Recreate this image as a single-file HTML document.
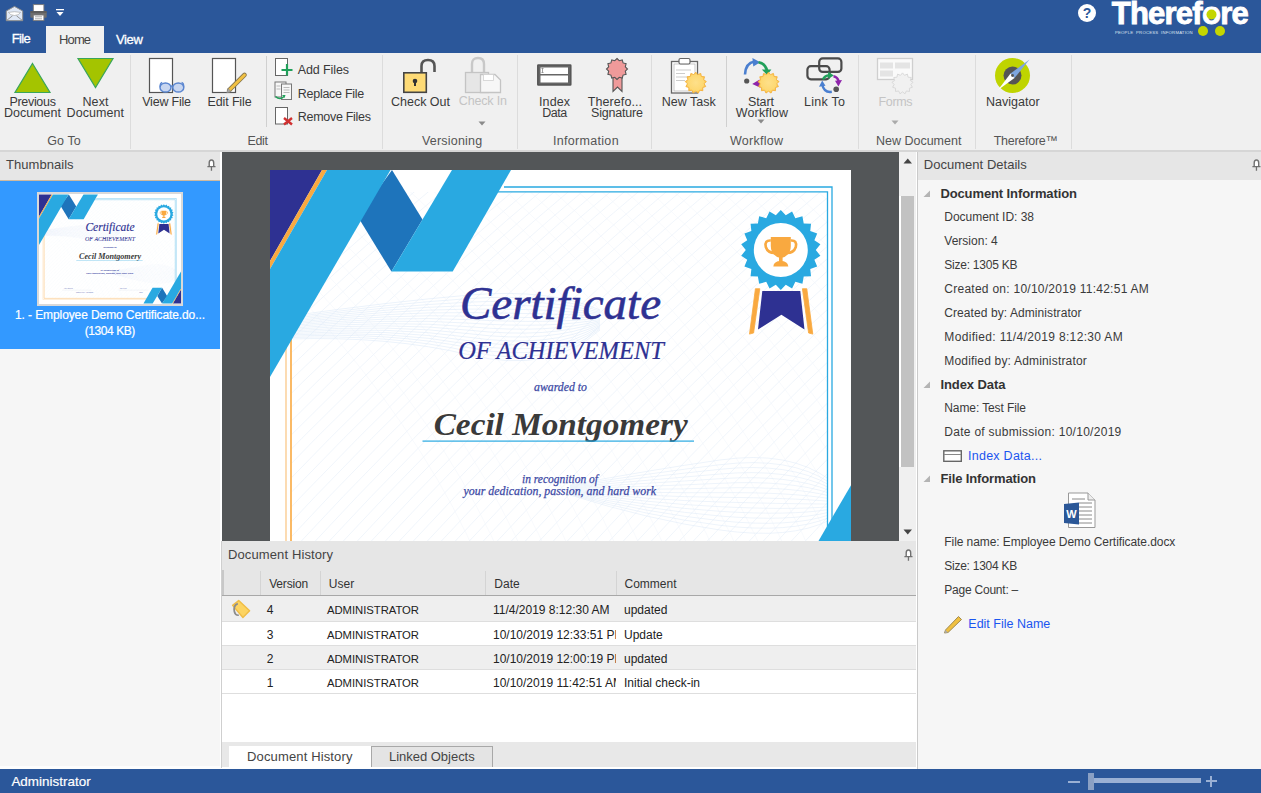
<!DOCTYPE html><html><head><meta charset="utf-8"><style>html,body{margin:0;padding:0;width:1261px;height:793px;overflow:hidden;background:#f6f6f6;}body{position:relative;font-family:"Liberation Sans", sans-serif;}div{box-sizing:border-box;}</style></head><body>
<div style="position:absolute;left:0px;top:0px;width:1261px;height:53px;background:#2b579a;"></div>
<svg style="position:absolute;left:5px;top:5px;overflow:visible;" width="20" height="17" viewBox="0 0 20 17"><path d="M1.3 6 L9.5 1.4 L17.7 6 V15.7 H1.3 Z" fill="#dfe8f6" stroke="#8c8c8c" stroke-width="1"/><path d="M3.5 7.4 Q9.5 6 15.5 7.4 Q14 10.5 9.5 10.5 Q5 10.5 3.5 7.4 Z" fill="#fff" stroke="#9a9a9a" stroke-width="0.6"/><path d="M1.3 15.7 L7.5 10.8 M17.7 15.7 L11.5 10.8" stroke="#8c8c8c" stroke-width="0.9"/></svg>
<svg style="position:absolute;left:29px;top:3px;overflow:visible;" width="19" height="19" viewBox="0 0 19 19"><rect x="4.3" y="1.6" width="10.6" height="7" fill="#fff" stroke="#7a7a7a" stroke-width="0.9"/><rect x="1.3" y="8.2" width="16.4" height="6.6" rx="0.8" fill="#6e6e6e"/><rect x="1.3" y="8.2" width="16.4" height="1.6" fill="#5a5a5a"/><rect x="4.3" y="12" width="10.6" height="5.6" fill="#fff" stroke="#7a7a7a" stroke-width="0.9"/><path d="M6 13.8h7M6 15.8h7" stroke="#888" stroke-width="0.7"/></svg>
<svg style="position:absolute;left:55px;top:8px;overflow:visible;" width="10" height="9" viewBox="0 0 10 9"><rect x="1" y="1" width="8" height="1.3" fill="#fff"/><path d="M1.5 4 L8.5 4 L5 8 Z" fill="#fff"/></svg>
<div style="position:absolute;left:11.70px;top:32.00px;font-size:13px;line-height:13px;color:#fff;font-weight:400;white-space:nowrap;letter-spacing:-0.618px;-webkit-text-stroke:0.3px #fff;">File</div>
<div style="position:absolute;left:46px;top:26px;width:58px;height:27px;background:#f0f0f0;"></div>
<div style="position:absolute;left:59.00px;top:33.00px;font-size:13px;line-height:13px;color:#444;font-weight:400;white-space:nowrap;letter-spacing:-0.862px;">Home</div>
<div style="position:absolute;left:116.10px;top:33.00px;font-size:13px;line-height:13px;color:#fff;font-weight:400;white-space:nowrap;letter-spacing:-0.418px;-webkit-text-stroke:0.3px #fff;">View</div>
<svg style="position:absolute;left:1077px;top:3px;overflow:visible;" width="20" height="20" viewBox="0 0 20 20"><circle cx="10" cy="10" r="9" fill="#fff"/><text x="10" y="15.2" text-anchor="middle" font-family="Liberation Sans" font-weight="700" font-size="14" fill="#2b579a">?</text></svg>
<div style="position:absolute;left:1111.70px;top:-2.00px;font-size:31px;line-height:31px;color:#fff;font-weight:700;white-space:nowrap;letter-spacing:-0.748px;-webkit-text-stroke:0.9px #fff;">Therefore</div>
<svg style="position:absolute;left:1195px;top:4px;overflow:visible;" width="60" height="36" viewBox="0 0 60 36"><circle cx="16.5" cy="10.5" r="5" fill="#c4d600"/><circle cx="8" cy="27" r="5" fill="#c4d600"/><circle cx="25" cy="27" r="5" fill="#c4d600"/></svg>
<div style="position:absolute;left:1115.00px;top:31.00px;font-size:4.3px;line-height:4.3px;color:#dde4f0;font-weight:400;white-space:nowrap;letter-spacing:0.183px;">PEOPLE&nbsp;&nbsp;PROCESS&nbsp;&nbsp;INFORMATION</div>
<div style="position:absolute;left:0px;top:53px;width:1261px;height:97px;background:#f0f0f0;"></div>
<div style="position:absolute;left:0px;top:150px;width:1261px;height:2px;background:#d6d6d6;"></div>
<div style="position:absolute;left:130px;top:55px;width:1px;height:94px;background:#dcdcdc;"></div>
<div style="position:absolute;left:382px;top:55px;width:1px;height:94px;background:#dcdcdc;"></div>
<div style="position:absolute;left:517px;top:55px;width:1px;height:94px;background:#dcdcdc;"></div>
<div style="position:absolute;left:651px;top:55px;width:1px;height:94px;background:#dcdcdc;"></div>
<div style="position:absolute;left:858px;top:55px;width:1px;height:94px;background:#dcdcdc;"></div>
<div style="position:absolute;left:975px;top:55px;width:1px;height:94px;background:#dcdcdc;"></div>
<div style="position:absolute;left:1071px;top:55px;width:1px;height:94px;background:#dcdcdc;"></div>
<div style="position:absolute;left:266px;top:56px;width:1px;height:71px;background:#d0d0d0;"></div>
<div style="position:absolute;left:726px;top:56px;width:1px;height:71px;background:#d0d0d0;"></div>
<div style="position:absolute;left:-16.00px;top:135.00px;width:160px;text-align:center;text-indent:0.119px;font-size:12.5px;line-height:12.5px;color:#555;font-weight:400;white-space:nowrap;letter-spacing:0.119px;">Go To</div>
<div style="position:absolute;left:177.70px;top:135.00px;width:160px;text-align:center;text-indent:-0.316px;font-size:12.5px;line-height:12.5px;color:#555;font-weight:400;white-space:nowrap;letter-spacing:-0.316px;">Edit</div>
<div style="position:absolute;left:372.10px;top:135.00px;width:160px;text-align:center;text-indent:0.203px;font-size:12.5px;line-height:12.5px;color:#555;font-weight:400;white-space:nowrap;letter-spacing:0.203px;">Versioning</div>
<div style="position:absolute;left:505.80px;top:135.00px;width:160px;text-align:center;text-indent:0.307px;font-size:12.5px;line-height:12.5px;color:#555;font-weight:400;white-space:nowrap;letter-spacing:0.307px;">Information</div>
<div style="position:absolute;left:676.50px;top:135.00px;width:160px;text-align:center;text-indent:0.261px;font-size:12.5px;line-height:12.5px;color:#555;font-weight:400;white-space:nowrap;letter-spacing:0.261px;">Workflow</div>
<div style="position:absolute;left:838.70px;top:135.00px;width:160px;text-align:center;text-indent:-0.005px;font-size:12.5px;line-height:12.5px;color:#555;font-weight:400;white-space:nowrap;letter-spacing:-0.005px;">New Document</div>
<div style="position:absolute;left:945.90px;top:135.00px;width:160px;text-align:center;text-indent:-0.267px;font-size:12.5px;line-height:12.5px;color:#555;font-weight:400;white-space:nowrap;letter-spacing:-0.267px;">Therefore™</div>
<svg style="position:absolute;left:14px;top:62px;overflow:visible;" width="38" height="32" viewBox="0 0 38 32"><path d="M18.5 1.5 L36 30.5 L1 30.5 Z" fill="#a4c400" stroke="#3aa55a" stroke-width="1.2"/></svg>
<svg style="position:absolute;left:77px;top:57px;overflow:visible;" width="38" height="32" viewBox="0 0 38 32"><path d="M1 1.5 L36 1.5 L18.5 30.5 Z" fill="#a4c400" stroke="#3aa55a" stroke-width="1.2"/></svg>
<div style="position:absolute;left:-27.35px;top:96.00px;width:120px;text-align:center;text-indent:-0.306px;font-size:12.5px;line-height:12.5px;color:#3a3a3a;font-weight:400;white-space:nowrap;letter-spacing:-0.306px;">Previous</div>
<div style="position:absolute;left:-27.50px;top:107.00px;width:120px;text-align:center;text-indent:0.002px;font-size:12.5px;line-height:12.5px;color:#3a3a3a;font-weight:400;white-space:nowrap;letter-spacing:0.002px;">Document</div>
<div style="position:absolute;left:35.50px;top:96.00px;width:120px;text-align:center;text-indent:0.099px;font-size:12.5px;line-height:12.5px;color:#3a3a3a;font-weight:400;white-space:nowrap;letter-spacing:0.099px;">Next</div>
<div style="position:absolute;left:35.30px;top:107.00px;width:120px;text-align:center;text-indent:0.059px;font-size:12.5px;line-height:12.5px;color:#3a3a3a;font-weight:400;white-space:nowrap;letter-spacing:0.059px;">Document</div>
<svg style="position:absolute;left:148px;top:57px;overflow:visible;" width="40" height="37" viewBox="0 0 40 37"><rect x="1.5" y="1.5" width="23" height="34" fill="#fff" stroke="#555" stroke-width="1.2"/><g fill="#c8d6f0" stroke="#5b86d0" stroke-width="1.5"><ellipse cx="17.5" cy="30.5" rx="5.5" ry="4.6"/><ellipse cx="30.3" cy="30.5" rx="5.5" ry="4.6"/></g><path d="M12.2 30 Q11.8 26 14.2 25.3 M35.6 30 Q36 26 33.6 25.3 M22.8 29.5 Q23.9 28.5 25 29.5" fill="none" stroke="#5b86d0" stroke-width="1.4"/></svg>
<div style="position:absolute;left:106.60px;top:96.00px;width:120px;text-align:center;text-indent:-0.211px;font-size:12.5px;line-height:12.5px;color:#3a3a3a;font-weight:400;white-space:nowrap;letter-spacing:-0.211px;">View File</div>
<svg style="position:absolute;left:211px;top:57px;overflow:visible;" width="38" height="37" viewBox="0 0 38 37"><rect x="1.5" y="1.5" width="23" height="34" fill="#fff" stroke="#555" stroke-width="1.2"/><path d="M18.2 33.2 L33.5 17.9" stroke="#8a7a50" stroke-width="4.6" stroke-linecap="round"/><path d="M18.2 33.2 L33.5 17.9" stroke="#f2c142" stroke-width="2.8" stroke-linecap="round"/><path d="M15.8 35.8 L17 31.5 L20 34.5 Z" fill="#aaa" stroke="#888" stroke-width="0.6"/></svg>
<div style="position:absolute;left:169.60px;top:96.00px;width:120px;text-align:center;text-indent:-0.145px;font-size:12.5px;line-height:12.5px;color:#3a3a3a;font-weight:400;white-space:nowrap;letter-spacing:-0.145px;">Edit File</div>
<svg style="position:absolute;left:274px;top:57px;overflow:visible;" width="20" height="20" viewBox="0 0 20 20"><rect x="1.5" y="1.5" width="12" height="17" fill="#fff" stroke="#666" stroke-width="1"/><path d="M13 7 V18.5 M7.5 13 H18.5" stroke="#21a05a" stroke-width="2.2"/></svg>
<div style="position:absolute;left:297.80px;top:64.00px;font-size:12.5px;line-height:12.5px;color:#3a3a3a;font-weight:400;white-space:nowrap;letter-spacing:-0.114px;">Add Files</div>
<svg style="position:absolute;left:274px;top:81px;overflow:visible;" width="20" height="20" viewBox="0 0 20 20"><rect x="1" y="1" width="11" height="15" fill="#f7f7f7" stroke="#777" stroke-width="1"/><rect x="7.5" y="3" width="10" height="15.5" fill="#f7f7f7" stroke="#777" stroke-width="1"/><path d="M9.5 6.5h6M9.5 9h6M9.5 11.5h6M2.5 5h4M2.5 8h4" stroke="#bbb" stroke-width="1"/><path d="M1.5 15.5 Q6 19.5 10 15.5" fill="none" stroke="#21a05a" stroke-width="1.6"/><path d="M8 14 L11.5 14 L10.5 17 Z" fill="#21a05a"/></svg>
<div style="position:absolute;left:297.80px;top:88.00px;font-size:12.5px;line-height:12.5px;color:#3a3a3a;font-weight:400;white-space:nowrap;letter-spacing:-0.271px;">Replace File</div>
<svg style="position:absolute;left:274px;top:106px;overflow:visible;" width="20" height="20" viewBox="0 0 20 20"><rect x="1.5" y="1.5" width="12" height="16.5" fill="#fff" stroke="#666" stroke-width="1"/><path d="M10 12 L18 18.5 M18 12 L10 18.5" stroke="#d03030" stroke-width="2.4"/></svg>
<div style="position:absolute;left:297.80px;top:111.00px;font-size:12.5px;line-height:12.5px;color:#3a3a3a;font-weight:400;white-space:nowrap;letter-spacing:-0.293px;">Remove Files</div>
<svg style="position:absolute;left:402px;top:58px;overflow:visible;" width="36" height="36" viewBox="0 0 36 36"><path d="M19.5 14.5 V8 Q19.5 2 26 2 Q32.5 2 32.5 8 V14" fill="none" stroke="#555" stroke-width="2.6"/><rect x="1.8" y="14.8" width="22.5" height="19.5" fill="#fedb76" stroke="#454545" stroke-width="1.6"/><circle cx="13" cy="23" r="2.3" fill="#333"/><rect x="12" y="23" width="2" height="5" fill="#333"/></svg>
<div style="position:absolute;left:360.50px;top:96.00px;width:120px;text-align:center;text-indent:-0.008px;font-size:12.5px;line-height:12.5px;color:#3a3a3a;font-weight:400;white-space:nowrap;letter-spacing:-0.008px;">Check Out</div>
<svg style="position:absolute;left:464px;top:56px;overflow:visible;" width="40" height="38" viewBox="0 0 40 38"><path d="M8 16 V8 Q8 2 14 2 Q20 2 20 8 V16" fill="none" stroke="#c8c8c8" stroke-width="2.4"/><rect x="1.5" y="16.5" width="23" height="20" fill="#e6e6e6" stroke="#c4c4c4" stroke-width="1.3"/><path d="M16.5 18.5 H31 L36.5 24 V36.5 H16.5 Z" fill="#f7f7f7" stroke="#c4c4c4" stroke-width="1.3"/><rect x="19.5" y="18.5" width="10" height="6" fill="#fff" stroke="#d0d0d0" stroke-width="0.8"/></svg>
<div style="position:absolute;left:422.90px;top:95.00px;width:120px;text-align:center;text-indent:-0.163px;font-size:12.5px;line-height:12.5px;color:#c4c4c4;font-weight:400;white-space:nowrap;letter-spacing:-0.163px;">Check In</div>
<svg style="position:absolute;left:478px;top:121px;overflow:visible;" width="8" height="5" viewBox="0 0 8 5"><path d="M0.5 0.5 H7.5 L4 4.5 Z" fill="#8a8a8a"/></svg>
<svg style="position:absolute;left:536px;top:63px;overflow:visible;" width="37" height="24" viewBox="0 0 37 24"><rect x="1.8" y="2" width="33" height="20" fill="#666" stroke="#555" stroke-width="1.5" rx="0.5"/><rect x="4.5" y="4.5" width="27.5" height="6.5" fill="#fff"/><rect x="4.5" y="12.5" width="27.5" height="7" fill="#fff"/><path d="M6.5 5.5 V9.5 M5.5 5.5 H7.5 M5.5 9.5 H7.5" stroke="#777" stroke-width="0.7"/></svg>
<div style="position:absolute;left:494.50px;top:96.00px;width:120px;text-align:center;text-indent:0.102px;font-size:12.5px;line-height:12.5px;color:#3a3a3a;font-weight:400;white-space:nowrap;letter-spacing:0.102px;">Index</div>
<div style="position:absolute;left:494.70px;top:107.00px;width:120px;text-align:center;text-indent:-0.469px;font-size:12.5px;line-height:12.5px;color:#3a3a3a;font-weight:400;white-space:nowrap;letter-spacing:-0.469px;">Data</div>
<svg style="position:absolute;left:605px;top:57px;overflow:visible;" width="25" height="37" viewBox="0 0 25 37"><path d="M8 19 V34.5 L12.5 30 L17 34.5 V19 Z" fill="#ef9a9a" stroke="#555" stroke-width="1.1"/><polygon points="12.00,1.50 14.23,3.69 17.25,2.91 18.08,5.92 21.09,6.75 20.31,9.77 22.50,12.00 20.31,14.23 21.09,17.25 18.08,18.08 17.25,21.09 14.23,20.31 12.00,22.50 9.77,20.31 6.75,21.09 5.92,18.08 2.91,17.25 3.69,14.23 1.50,12.00 3.69,9.77 2.91,6.75 5.92,5.92 6.75,2.91 9.77,3.69" fill="#ef9a9a" stroke="#555" stroke-width="1.1"/></svg>
<div style="position:absolute;left:554.90px;top:96.00px;width:120px;text-align:center;text-indent:0.089px;font-size:12.5px;line-height:12.5px;color:#3a3a3a;font-weight:400;white-space:nowrap;letter-spacing:0.089px;">Therefo...</div>
<div style="position:absolute;left:557.00px;top:107.00px;width:120px;text-align:center;text-indent:-0.189px;font-size:12.5px;line-height:12.5px;color:#3a3a3a;font-weight:400;white-space:nowrap;letter-spacing:-0.189px;">Signature</div>
<svg style="position:absolute;left:670px;top:57px;overflow:visible;" width="40" height="38" viewBox="0 0 40 38"><defs><radialGradient id="sung"><stop offset="0" stop-color="#fee08a"/><stop offset="0.75" stop-color="#fdd872"/><stop offset="1" stop-color="#f9c040"/></radialGradient></defs><rect x="1.5" y="4.5" width="26" height="31.5" fill="#fff" stroke="#666" stroke-width="1.3"/><rect x="4" y="7" width="21" height="27" fill="none" stroke="#bbb" stroke-width="0.8"/><rect x="9" y="1.5" width="11" height="5.5" rx="1.5" fill="#fff" stroke="#666" stroke-width="1.2"/><path d="M6 13h15M6 16.5h9M6 20h15M6 23.5h9" stroke="#ccc" stroke-width="1.2"/><g transform="translate(25.8,25.8)"><polygon points="0.00,-10.60 2.01,-8.16 4.93,-9.39 5.57,-6.29 8.72,-6.02 7.85,-2.98 10.52,-1.28 8.34,1.01 9.91,3.76 6.91,4.77 7.03,7.93 3.90,7.44 2.54,10.29 -0.00,8.40 -2.54,10.29 -3.90,7.44 -7.03,7.93 -6.91,4.77 -9.91,3.76 -8.34,1.01 -10.52,-1.28 -7.85,-2.98 -8.72,-6.02 -5.57,-6.29 -4.93,-9.39 -2.01,-8.16" fill="url(#sung)" stroke="#f5b03a" stroke-width="0.9"/></g></svg>
<div style="position:absolute;left:628.80px;top:96.00px;width:120px;text-align:center;text-indent:0.004px;font-size:12.5px;line-height:12.5px;color:#3a3a3a;font-weight:400;white-space:nowrap;letter-spacing:0.004px;">New Task</div>
<svg style="position:absolute;left:741px;top:56px;overflow:visible;" width="40" height="38" viewBox="0 0 40 38"><path d="M4 18.5 Q4.5 7 13.5 5.5" fill="none" stroke="#4a7fd0" stroke-width="2.6"/><path d="M11.4 2 L19.2 6.3 L12.3 10.6 Z" fill="#4a7fd0"/><path d="M17.5 6.2 Q24.5 7.5 26 14.5" fill="none" stroke="#21a05a" stroke-width="2.6"/><path d="M20.8 13.5 L30.4 13.5 L26.2 19 Z" fill="#21a05a"/><circle cx="5.7" cy="25" r="2.6" fill="#555"/><path d="M11.2 28.1 L18.6 23.5 L19.5 31.8 Z" fill="#8e24aa"/><g transform="translate(27.5,26.8)"><polygon points="0.00,-10.60 2.01,-8.16 4.93,-9.39 5.57,-6.29 8.72,-6.02 7.85,-2.98 10.52,-1.28 8.34,1.01 9.91,3.76 6.91,4.77 7.03,7.93 3.90,7.44 2.54,10.29 -0.00,8.40 -2.54,10.29 -3.90,7.44 -7.03,7.93 -6.91,4.77 -9.91,3.76 -8.34,1.01 -10.52,-1.28 -7.85,-2.98 -8.72,-6.02 -5.57,-6.29 -4.93,-9.39 -2.01,-8.16" fill="url(#sung)" stroke="#f5b03a" stroke-width="0.9"/></g></svg>
<div style="position:absolute;left:701.00px;top:96.00px;width:120px;text-align:center;text-indent:-0.102px;font-size:12.5px;line-height:12.5px;color:#3a3a3a;font-weight:400;white-space:nowrap;letter-spacing:-0.102px;">Start</div>
<div style="position:absolute;left:701.90px;top:107.00px;width:120px;text-align:center;text-indent:0.147px;font-size:12.5px;line-height:12.5px;color:#3a3a3a;font-weight:400;white-space:nowrap;letter-spacing:0.147px;">Workflow</div>
<svg style="position:absolute;left:757px;top:119px;overflow:visible;" width="8" height="5" viewBox="0 0 8 5"><path d="M0.5 0.5 H7.5 L4 4.5 Z" fill="#8a8a8a"/></svg>
<svg style="position:absolute;left:805px;top:56px;overflow:visible;" width="40" height="38" viewBox="0 0 40 38"><rect x="14.2" y="2.4" width="22.2" height="13.5" rx="3.5" fill="none" stroke="#4a4a4a" stroke-width="2.2"/><rect x="2.4" y="10.2" width="22.2" height="13.1" rx="3.5" fill="none" stroke="#4a4a4a" stroke-width="2.2"/><path d="M18 23.5 Q19.5 19.5 24.5 19.2" fill="none" stroke="#21a05a" stroke-width="2.4"/><path d="M23.2 15.8 L28.8 19.4 L23.2 22.8 Z" fill="#21a05a"/><path d="M28.5 20.3 Q32.5 21 33.8 25.5" fill="none" stroke="#8e24aa" stroke-width="2.4"/><path d="M30 24.8 L37 24 L33.4 30.5 Z" fill="#8e24aa"/><path d="M26.8 35.8 Q19 37 17.2 28.5" fill="none" stroke="#4a7fd0" stroke-width="2.4"/><path d="M14 30.7 L17.2 24.4 L20.5 29.8 Z" fill="#4a7fd0"/><circle cx="31.2" cy="33.3" r="2.8" fill="#555"/></svg>
<div style="position:absolute;left:764.50px;top:96.00px;width:120px;text-align:center;text-indent:0.268px;font-size:12.5px;line-height:12.5px;color:#3a3a3a;font-weight:400;white-space:nowrap;letter-spacing:0.268px;">Link To</div>
<svg style="position:absolute;left:876px;top:57px;overflow:visible;" width="40" height="38" viewBox="0 0 40 38"><rect x="1.5" y="1.5" width="35" height="21" fill="#fafafa" stroke="#cfcfcf" stroke-width="1.3"/><rect x="4" y="5.5" width="13" height="6" fill="#e4e4e4"/><rect x="19" y="5.5" width="15" height="6" fill="#e4e4e4"/><rect x="4" y="13.5" width="13" height="6" fill="#e4e4e4"/><g transform="translate(26.5,26.5)"><polygon points="0.00,-10.60 2.01,-8.16 4.93,-9.39 5.57,-6.29 8.72,-6.02 7.85,-2.98 10.52,-1.28 8.34,1.01 9.91,3.76 6.91,4.77 7.03,7.93 3.90,7.44 2.54,10.29 -0.00,8.40 -2.54,10.29 -3.90,7.44 -7.03,7.93 -6.91,4.77 -9.91,3.76 -8.34,1.01 -10.52,-1.28 -7.85,-2.98 -8.72,-6.02 -5.57,-6.29 -4.93,-9.39 -2.01,-8.16" fill="#f1f1f1" stroke="#d6d6d6" stroke-width="0.9"/></g></svg>
<div style="position:absolute;left:835.60px;top:96.00px;width:120px;text-align:center;text-indent:-0.355px;font-size:12.5px;line-height:12.5px;color:#c4c4c4;font-weight:400;white-space:nowrap;letter-spacing:-0.355px;">Forms</div>
<svg style="position:absolute;left:891px;top:120px;overflow:visible;" width="8" height="5" viewBox="0 0 8 5"><path d="M0.5 0.5 H7.5 L4 4.5 Z" fill="#aaa"/></svg>
<svg style="position:absolute;left:994px;top:57px;overflow:visible;" width="38" height="38" viewBox="0 0 38 38"><circle cx="18.5" cy="18.5" r="17.5" fill="#bfd400"/><circle cx="18.5" cy="18.5" r="9" fill="#555"/><path d="M35.5 2.5 L20.5 21 L16.5 16.5 Z" fill="#7ea6e0"/><path d="M4 33 L16.5 16.5 L20.5 21 Z" fill="#fff"/><circle cx="18.5" cy="18.5" r="1.4" fill="#555"/></svg>
<div style="position:absolute;left:952.80px;top:96.00px;width:120px;text-align:center;text-indent:0.013px;font-size:12.5px;line-height:12.5px;color:#3a3a3a;font-weight:400;white-space:nowrap;letter-spacing:0.013px;">Navigator</div>
<div style="position:absolute;left:0px;top:152px;width:220px;height:617px;background:#f6f6f6;"></div>
<div style="position:absolute;left:0px;top:152px;width:220px;height:28px;background:#e6e6e6;"></div>
<div style="position:absolute;left:6.00px;top:158.00px;font-size:13px;line-height:13px;color:#444;font-weight:400;white-space:nowrap;letter-spacing:0.044px;">Thumbnails</div>
<svg style="position:absolute;left:207px;top:159px;overflow:visible;" width="10" height="14" viewBox="0 0 10 14"><path d="M2.2 7.4 V4 Q2.2 1 4.45 1 Q6.7 1 6.7 4 V7.4" fill="#fff" stroke="#707070" stroke-width="1.4"/><path d="M0.4 7.7 H8.5 M4.45 7.7 V11.8" stroke="#707070" stroke-width="1.3"/></svg>
<div style="position:absolute;left:0px;top:180px;width:220px;height:1px;background:#cdb9a0;"></div>
<div style="position:absolute;left:0px;top:181px;width:220px;height:168px;background:#3399ff;"></div>
<div style="position:absolute;left:37px;top:192px;width:146px;height:114px;background:#d9d9d9;"></div>
<div style="position:absolute;left:39px;top:194px;width:142px;height:110px;overflow:hidden;background:#fff"><svg width="142" height="110" viewBox="0 0 581 447" style="display:block"><defs><clipPath id="cin142"><rect x="22" y="22" width="535" height="403"/></clipPath></defs><rect width="581" height="447" fill="#fff"/><g clip-path="url(#cin142)"><path d="M170 0 Q-70 200 -290 447" fill="none" stroke="#e6eef9" stroke-width="0.6"/><path d="M184 0 Q-56 200 -276 447" fill="none" stroke="#e6eef9" stroke-width="0.6"/><path d="M198 0 Q-42 200 -262 447" fill="none" stroke="#e6eef9" stroke-width="0.6"/><path d="M212 0 Q-28 200 -248 447" fill="none" stroke="#e6eef9" stroke-width="0.6"/><path d="M226 0 Q-14 200 -234 447" fill="none" stroke="#e6eef9" stroke-width="0.6"/><path d="M240 0 Q0 200 -220 447" fill="none" stroke="#e6eef9" stroke-width="0.6"/><path d="M254 0 Q14 200 -206 447" fill="none" stroke="#e6eef9" stroke-width="0.6"/><path d="M268 0 Q28 200 -192 447" fill="none" stroke="#e6eef9" stroke-width="0.6"/><path d="M282 0 Q42 200 -178 447" fill="none" stroke="#e6eef9" stroke-width="0.6"/><path d="M296 0 Q56 200 -164 447" fill="none" stroke="#e6eef9" stroke-width="0.6"/><path d="M310 0 Q70 200 -150 447" fill="none" stroke="#e6eef9" stroke-width="0.6"/><path d="M324 0 Q84 200 -136 447" fill="none" stroke="#e6eef9" stroke-width="0.6"/><path d="M338 0 Q98 200 -122 447" fill="none" stroke="#e6eef9" stroke-width="0.6"/><path d="M352 0 Q112 200 -108 447" fill="none" stroke="#e6eef9" stroke-width="0.6"/><path d="M366 0 Q126 200 -94 447" fill="none" stroke="#e6eef9" stroke-width="0.6"/><path d="M380 0 Q140 200 -80 447" fill="none" stroke="#e6eef9" stroke-width="0.6"/><path d="M394 0 Q154 200 -66 447" fill="none" stroke="#e6eef9" stroke-width="0.6"/><path d="M408 0 Q168 200 -52 447" fill="none" stroke="#e6eef9" stroke-width="0.6"/><path d="M422 0 Q182 200 -38 447" fill="none" stroke="#e6eef9" stroke-width="0.6"/><path d="M436 0 Q196 200 -24 447" fill="none" stroke="#e6eef9" stroke-width="0.6"/><path d="M450 0 Q210 200 -10 447" fill="none" stroke="#e6eef9" stroke-width="0.6"/><path d="M464 0 Q224 200 4 447" fill="none" stroke="#e6eef9" stroke-width="0.6"/><path d="M478 0 Q238 200 18 447" fill="none" stroke="#e6eef9" stroke-width="0.6"/><path d="M492 0 Q252 200 32 447" fill="none" stroke="#e6eef9" stroke-width="0.6"/><path d="M506 0 Q266 200 46 447" fill="none" stroke="#e6eef9" stroke-width="0.6"/><path d="M520 0 Q280 200 60 447" fill="none" stroke="#e6eef9" stroke-width="0.6"/><path d="M534 0 Q294 200 74 447" fill="none" stroke="#e6eef9" stroke-width="0.6"/><path d="M548 0 Q308 200 88 447" fill="none" stroke="#e6eef9" stroke-width="0.6"/><path d="M562 0 Q322 200 102 447" fill="none" stroke="#e6eef9" stroke-width="0.6"/><path d="M576 0 Q336 200 116 447" fill="none" stroke="#e6eef9" stroke-width="0.6"/><path d="M590 0 Q350 200 130 447" fill="none" stroke="#e6eef9" stroke-width="0.6"/><path d="M604 0 Q364 200 144 447" fill="none" stroke="#e6eef9" stroke-width="0.6"/><path d="M618 0 Q378 200 158 447" fill="none" stroke="#e6eef9" stroke-width="0.6"/><path d="M632 0 Q392 200 172 447" fill="none" stroke="#e6eef9" stroke-width="0.6"/><path d="M646 0 Q406 200 186 447" fill="none" stroke="#e6eef9" stroke-width="0.6"/><path d="M660 0 Q420 200 200 447" fill="none" stroke="#e6eef9" stroke-width="0.6"/><path d="M674 0 Q434 200 214 447" fill="none" stroke="#e6eef9" stroke-width="0.6"/><path d="M688 0 Q448 200 228 447" fill="none" stroke="#e6eef9" stroke-width="0.6"/><path d="M702 0 Q462 200 242 447" fill="none" stroke="#e6eef9" stroke-width="0.6"/><path d="M716 0 Q476 200 256 447" fill="none" stroke="#e6eef9" stroke-width="0.6"/><path d="M730 0 Q490 200 270 447" fill="none" stroke="#e6eef9" stroke-width="0.6"/><path d="M744 0 Q504 200 284 447" fill="none" stroke="#e6eef9" stroke-width="0.6"/><path d="M758 0 Q518 200 298 447" fill="none" stroke="#e6eef9" stroke-width="0.6"/><path d="M772 0 Q532 200 312 447" fill="none" stroke="#e6eef9" stroke-width="0.6"/><path d="M786 0 Q546 200 326 447" fill="none" stroke="#e6eef9" stroke-width="0.6"/><path d="M800 0 Q560 200 340 447" fill="none" stroke="#e6eef9" stroke-width="0.6"/><path d="M814 0 Q574 200 354 447" fill="none" stroke="#e6eef9" stroke-width="0.6"/><path d="M828 0 Q588 200 368 447" fill="none" stroke="#e6eef9" stroke-width="0.6"/><path d="M842 0 Q602 200 382 447" fill="none" stroke="#e6eef9" stroke-width="0.6"/><path d="M856 0 Q616 200 396 447" fill="none" stroke="#e6eef9" stroke-width="0.6"/><path d="M870 0 Q630 200 410 447" fill="none" stroke="#e6eef9" stroke-width="0.6"/><path d="M884 0 Q644 200 424 447" fill="none" stroke="#e6eef9" stroke-width="0.6"/><path d="M898 0 Q658 200 438 447" fill="none" stroke="#e6eef9" stroke-width="0.6"/><path d="M912 0 Q672 200 452 447" fill="none" stroke="#e6eef9" stroke-width="0.6"/><path d="M926 0 Q686 200 466 447" fill="none" stroke="#e6eef9" stroke-width="0.6"/><path d="M940 0 Q700 200 480 447" fill="none" stroke="#e6eef9" stroke-width="0.6"/><path d="M954 0 Q714 200 494 447" fill="none" stroke="#e6eef9" stroke-width="0.6"/><path d="M968 0 Q728 200 508 447" fill="none" stroke="#e6eef9" stroke-width="0.6"/><path d="M982 0 Q742 200 522 447" fill="none" stroke="#e6eef9" stroke-width="0.6"/><path d="M996 0 Q756 200 536 447" fill="none" stroke="#e6eef9" stroke-width="0.6"/><path d="M-100 0 Q160 230 230 447" fill="none" stroke="#f1f5fb" stroke-width="0.5"/><path d="M-76 0 Q184 230 254 447" fill="none" stroke="#f1f5fb" stroke-width="0.5"/><path d="M-52 0 Q208 230 278 447" fill="none" stroke="#f1f5fb" stroke-width="0.5"/><path d="M-28 0 Q232 230 302 447" fill="none" stroke="#f1f5fb" stroke-width="0.5"/><path d="M-4 0 Q256 230 326 447" fill="none" stroke="#f1f5fb" stroke-width="0.5"/><path d="M20 0 Q280 230 350 447" fill="none" stroke="#f1f5fb" stroke-width="0.5"/><path d="M44 0 Q304 230 374 447" fill="none" stroke="#f1f5fb" stroke-width="0.5"/><path d="M68 0 Q328 230 398 447" fill="none" stroke="#f1f5fb" stroke-width="0.5"/><path d="M92 0 Q352 230 422 447" fill="none" stroke="#f1f5fb" stroke-width="0.5"/><path d="M116 0 Q376 230 446 447" fill="none" stroke="#f1f5fb" stroke-width="0.5"/><path d="M140 0 Q400 230 470 447" fill="none" stroke="#f1f5fb" stroke-width="0.5"/><path d="M164 0 Q424 230 494 447" fill="none" stroke="#f1f5fb" stroke-width="0.5"/><path d="M188 0 Q448 230 518 447" fill="none" stroke="#f1f5fb" stroke-width="0.5"/><path d="M212 0 Q472 230 542 447" fill="none" stroke="#f1f5fb" stroke-width="0.5"/><path d="M236 0 Q496 230 566 447" fill="none" stroke="#f1f5fb" stroke-width="0.5"/><path d="M260 0 Q520 230 590 447" fill="none" stroke="#f1f5fb" stroke-width="0.5"/><path d="M284 0 Q544 230 614 447" fill="none" stroke="#f1f5fb" stroke-width="0.5"/><path d="M308 0 Q568 230 638 447" fill="none" stroke="#f1f5fb" stroke-width="0.5"/><path d="M332 0 Q592 230 662 447" fill="none" stroke="#f1f5fb" stroke-width="0.5"/><path d="M356 0 Q616 230 686 447" fill="none" stroke="#f1f5fb" stroke-width="0.5"/><path d="M380 0 Q640 230 710 447" fill="none" stroke="#f1f5fb" stroke-width="0.5"/><path d="M404 0 Q664 230 734 447" fill="none" stroke="#f1f5fb" stroke-width="0.5"/><path d="M428 0 Q688 230 758 447" fill="none" stroke="#f1f5fb" stroke-width="0.5"/><path d="M452 0 Q712 230 782 447" fill="none" stroke="#f1f5fb" stroke-width="0.5"/><path d="M476 0 Q736 230 806 447" fill="none" stroke="#f1f5fb" stroke-width="0.5"/><path d="M500 0 Q760 230 830 447" fill="none" stroke="#f1f5fb" stroke-width="0.5"/><path d="M524 0 Q784 230 854 447" fill="none" stroke="#f1f5fb" stroke-width="0.5"/><path d="M548 0 Q808 230 878 447" fill="none" stroke="#f1f5fb" stroke-width="0.5"/><path d="M572 0 Q832 230 902 447" fill="none" stroke="#f1f5fb" stroke-width="0.5"/><path d="M596 0 Q856 230 926 447" fill="none" stroke="#f1f5fb" stroke-width="0.5"/><path d="M20 146.0 Q120 131.7 200 125.0 T 330 140.0" fill="none" stroke="#d9e6f6" stroke-width="0.5"/><path d="M20 147.4 Q120 133.7 200 128.5 T 330 141.2" fill="none" stroke="#d9e6f6" stroke-width="0.5"/><path d="M20 148.7 Q120 135.7 200 132.1 T 330 142.4" fill="none" stroke="#d9e6f6" stroke-width="0.5"/><path d="M20 150.1 Q120 137.7 200 135.6 T 330 143.5" fill="none" stroke="#d9e6f6" stroke-width="0.5"/><path d="M20 151.4 Q120 139.7 200 139.1 T 330 144.7" fill="none" stroke="#d9e6f6" stroke-width="0.5"/><path d="M20 152.8 Q120 141.7 200 142.6 T 330 145.9" fill="none" stroke="#d9e6f6" stroke-width="0.5"/><path d="M20 154.1 Q120 143.7 200 146.2 T 330 147.1" fill="none" stroke="#d9e6f6" stroke-width="0.5"/><path d="M20 155.5 Q120 145.7 200 149.7 T 330 148.2" fill="none" stroke="#d9e6f6" stroke-width="0.5"/><path d="M20 156.8 Q120 147.7 200 153.2 T 330 149.4" fill="none" stroke="#d9e6f6" stroke-width="0.5"/><path d="M20 158.2 Q120 149.8 200 156.8 T 330 150.6" fill="none" stroke="#d9e6f6" stroke-width="0.5"/><path d="M20 159.5 Q120 151.8 200 160.3 T 330 151.8" fill="none" stroke="#d9e6f6" stroke-width="0.5"/><path d="M20 160.9 Q120 153.8 200 163.8 T 330 152.9" fill="none" stroke="#d9e6f6" stroke-width="0.5"/><path d="M20 162.2 Q120 155.8 200 167.4 T 330 154.1" fill="none" stroke="#d9e6f6" stroke-width="0.5"/><path d="M20 163.6 Q120 157.8 200 170.9 T 330 155.3" fill="none" stroke="#d9e6f6" stroke-width="0.5"/><path d="M20 164.9 Q120 159.8 200 174.4 T 330 156.5" fill="none" stroke="#d9e6f6" stroke-width="0.5"/><path d="M20 166.3 Q120 161.8 200 177.9 T 330 157.6" fill="none" stroke="#d9e6f6" stroke-width="0.5"/><path d="M20 167.6 Q120 163.8 200 181.5 T 330 158.8" fill="none" stroke="#d9e6f6" stroke-width="0.5"/><path d="M20 169.0 Q120 165.8 200 185.0 T 330 160.0" fill="none" stroke="#d9e6f6" stroke-width="0.5"/><path d="M300 315.0 Q380 300.0 450 290.0 T 560 310.0" fill="none" stroke="#dce8f7" stroke-width="0.5"/><path d="M300 315.7 Q380 303.3 450 294.7 T 560 312.7" fill="none" stroke="#dce8f7" stroke-width="0.5"/><path d="M300 316.3 Q380 306.7 450 299.3 T 560 315.3" fill="none" stroke="#dce8f7" stroke-width="0.5"/><path d="M300 317.0 Q380 310.0 450 304.0 T 560 318.0" fill="none" stroke="#dce8f7" stroke-width="0.5"/><path d="M300 317.7 Q380 313.3 450 308.7 T 560 320.7" fill="none" stroke="#dce8f7" stroke-width="0.5"/><path d="M300 318.3 Q380 316.7 450 313.3 T 560 323.3" fill="none" stroke="#dce8f7" stroke-width="0.5"/><path d="M300 319.0 Q380 320.0 450 318.0 T 560 326.0" fill="none" stroke="#dce8f7" stroke-width="0.5"/><path d="M300 319.7 Q380 323.3 450 322.7 T 560 328.7" fill="none" stroke="#dce8f7" stroke-width="0.5"/><path d="M300 320.3 Q380 326.7 450 327.3 T 560 331.3" fill="none" stroke="#dce8f7" stroke-width="0.5"/><path d="M300 321.0 Q380 330.0 450 332.0 T 560 334.0" fill="none" stroke="#dce8f7" stroke-width="0.5"/><path d="M300 321.7 Q380 333.3 450 336.7 T 560 336.7" fill="none" stroke="#dce8f7" stroke-width="0.5"/><path d="M300 322.3 Q380 336.7 450 341.3 T 560 339.3" fill="none" stroke="#dce8f7" stroke-width="0.5"/><path d="M300 323.0 Q380 340.0 450 346.0 T 560 342.0" fill="none" stroke="#dce8f7" stroke-width="0.5"/><path d="M300 323.7 Q380 343.3 450 350.7 T 560 344.7" fill="none" stroke="#dce8f7" stroke-width="0.5"/><path d="M300 324.3 Q380 346.7 450 355.3 T 560 347.3" fill="none" stroke="#dce8f7" stroke-width="0.5"/><path d="M300 325.0 Q380 350.0 450 360.0 T 560 350.0" fill="none" stroke="#dce8f7" stroke-width="0.5"/></g><path d="M234 17 H562 V430" fill="none" stroke="#29a9e1" stroke-width="1.3"/><path d="M228 21.8 H557.5 V425.5" fill="none" stroke="#29a9e1" stroke-width="1.3"/><path d="M16 160 V430 H470" fill="none" stroke="#fbc98a" stroke-width="1.3"/><path d="M21 160 V425.5 H470" fill="none" stroke="#f9a940" stroke-width="1.6"/><path d="M122 0 L152.5 49.5 L121.4 101.6 L88 47 Z" fill="#1e74bb"/><path d="M0 0 L52 0 L0 91 Z" fill="#2e3192"/><path d="M52 0 L57 0 L0 99 L0 91 Z" fill="#f9a940"/><path d="M57 0 L120.5 0 L0 207 L0 99 Z" fill="#29a9e1"/><path d="M182 0 L241 0 L182.7 101.6 L121.4 101.6 Z" fill="#29a9e1"/><g transform="translate(581,447) rotate(180) scale(0.637)"><path d="M122 0 L152.5 49.5 L121.4 101.6 L88 47 Z" fill="#1e74bb"/><path d="M0 0 L52 0 L0 91 Z" fill="#2e3192"/><path d="M52 0 L57 0 L0 99 L0 91 Z" fill="#f9a940"/><path d="M57 0 L120.5 0 L0 207 L0 99 Z" fill="#29a9e1"/><path d="M182 0 L241 0 L182.7 101.6 L121.4 101.6 Z" fill="#29a9e1"/></g><g transform="translate(510.8,80)"><path d="M-25.4 38.7 L-21 38.7 L-27.2 83 L-31.3 84.1 Z" fill="#f9a940" stroke="#f9a940" stroke-width="0.8"/><path d="M21.6 38.7 L26 38.7 L32 84.1 L27.8 83 Z" fill="#f9a940" stroke="#f9a940" stroke-width="0.8"/><path d="M-18.5 41 L19.5 41 L23.7 79.6 L0.6 64.8 L-22.8 79.6 Z" fill="#2e3192"/><polygon points="0.00,-40.00 4.98,-34.64 11.27,-38.38 14.54,-31.84 21.63,-33.65 22.92,-26.45 30.23,-26.19 29.44,-18.92 36.39,-16.62 33.58,-9.86 39.59,-5.69 35.00,-0.00 39.59,5.69 33.58,9.86 36.39,16.62 29.44,18.92 30.23,26.19 22.92,26.45 21.63,33.65 14.54,31.84 11.27,38.38 4.98,34.64 0.00,40.00 -4.98,34.64 -11.27,38.38 -14.54,31.84 -21.63,33.65 -22.92,26.45 -30.23,26.19 -29.44,18.92 -36.39,16.62 -33.58,9.86 -39.59,5.69 -35.00,0.00 -39.59,-5.69 -33.58,-9.86 -36.39,-16.62 -29.44,-18.92 -30.23,-26.19 -22.92,-26.45 -21.63,-33.65 -14.54,-31.84 -11.27,-38.38 -4.98,-34.64" fill="#29a9e1"/><circle r="27" fill="#fff"/><path d="M-10 -13 H10 V-4 Q10 6 0 8 Q-10 6 -10 -4 Z" fill="#f9a940"/><path d="M-10 -9.5 Q-16.5 -10 -15 -3 Q-13 3 -6 3" fill="none" stroke="#f9a940" stroke-width="2.6"/><path d="M10 -9.5 Q16.5 -10 15 -3 Q13 3 6 3" fill="none" stroke="#f9a940" stroke-width="2.6"/><rect x="-1.8" y="6" width="3.6" height="6" fill="#f9a940"/><path d="M-7.5 16.5 Q-7 11 0 11 Q7 11 7.5 16.5 Z" fill="#f9a940"/></g><text x="290.5" y="148.5" text-anchor="middle" font-family="Liberation Serif" font-style="italic" font-size="47" fill="#2e3192" stroke="#2e3192" stroke-width="0.6">Certificate</text><text x="291" y="189.4" text-anchor="middle" font-family="Liberation Serif" font-style="italic" font-size="24.5" fill="#2e3192" stroke="#2e3192" stroke-width="0.2">OF ACHIEVEMENT</text><text x="290.5" y="220.7" text-anchor="middle" font-family="Liberation Serif" font-style="italic" font-size="11.8" fill="#3d4aa5" stroke="#3d4aa5" stroke-width="0.25" textLength="53" lengthAdjust="spacingAndGlyphs">awarded to</text><text x="290.7" y="264.7" text-anchor="middle" font-family="Liberation Serif" font-style="italic" font-weight="700" font-size="32.5" fill="#3a3a3a" textLength="254" lengthAdjust="spacingAndGlyphs">Cecil Montgomery</text><rect x="152.5" y="270.5" width="271.5" height="1.2" fill="#29a9e1"/><text x="290" y="313" text-anchor="middle" font-family="Liberation Serif" font-style="italic" font-size="11.5" fill="#3d4aa5" stroke="#3d4aa5" stroke-width="0.25" textLength="76" lengthAdjust="spacingAndGlyphs">in recognition of</text><text x="289.8" y="325.4" text-anchor="middle" font-family="Liberation Serif" font-style="italic" font-size="11.8" fill="#3d4aa5" stroke="#3d4aa5" stroke-width="0.25" textLength="192.5" lengthAdjust="spacingAndGlyphs">your dedication, passion, and hard work</text><path d="M95 392 H215 M325 392 H445" stroke="#c9d3e6" stroke-width="0.8"/><text x="100" y="388" font-family="Liberation Serif" font-size="8" fill="#3d4aa5">AWARDED</text><text x="330" y="388" font-family="Liberation Serif" font-size="8" fill="#3d4aa5">SIGNED</text><text x="150" y="404" font-family="Liberation Serif" font-size="8" fill="#3d4aa5">Jessica Hill - President</text><text x="410" y="404" font-family="Liberation Serif" font-size="8" fill="#3d4aa5">Date</text></svg></div>
<div style="position:absolute;left:0.00px;top:309.00px;width:220px;text-align:center;text-indent:-0.098px;font-size:12px;line-height:12px;color:#fff;font-weight:400;white-space:nowrap;letter-spacing:-0.098px;-webkit-text-stroke:0.2px #fff;">1. - Employee Demo Certificate.do...</div>
<div style="position:absolute;left:0.00px;top:325.00px;width:220px;text-align:center;text-indent:-0.416px;font-size:12px;line-height:12px;color:#fff;font-weight:400;white-space:nowrap;letter-spacing:-0.416px;-webkit-text-stroke:0.2px #fff;">(1304 KB)</div>
<div style="position:absolute;left:220px;top:152px;width:2px;height:617px;background:#ffffff;"></div>
<div style="position:absolute;left:222px;top:152px;width:677px;height:389px;background:#535658;"></div>
<div style="position:absolute;left:270px;top:170px;width:581px;height:371px;overflow:hidden;background:#fff"><svg width="581" height="447" viewBox="0 0 581 447" style="display:block"><defs><clipPath id="cin581"><rect x="22" y="22" width="535" height="403"/></clipPath></defs><rect width="581" height="447" fill="#fff"/><g clip-path="url(#cin581)"><path d="M170 0 Q-70 200 -290 447" fill="none" stroke="#e6eef9" stroke-width="0.6"/><path d="M184 0 Q-56 200 -276 447" fill="none" stroke="#e6eef9" stroke-width="0.6"/><path d="M198 0 Q-42 200 -262 447" fill="none" stroke="#e6eef9" stroke-width="0.6"/><path d="M212 0 Q-28 200 -248 447" fill="none" stroke="#e6eef9" stroke-width="0.6"/><path d="M226 0 Q-14 200 -234 447" fill="none" stroke="#e6eef9" stroke-width="0.6"/><path d="M240 0 Q0 200 -220 447" fill="none" stroke="#e6eef9" stroke-width="0.6"/><path d="M254 0 Q14 200 -206 447" fill="none" stroke="#e6eef9" stroke-width="0.6"/><path d="M268 0 Q28 200 -192 447" fill="none" stroke="#e6eef9" stroke-width="0.6"/><path d="M282 0 Q42 200 -178 447" fill="none" stroke="#e6eef9" stroke-width="0.6"/><path d="M296 0 Q56 200 -164 447" fill="none" stroke="#e6eef9" stroke-width="0.6"/><path d="M310 0 Q70 200 -150 447" fill="none" stroke="#e6eef9" stroke-width="0.6"/><path d="M324 0 Q84 200 -136 447" fill="none" stroke="#e6eef9" stroke-width="0.6"/><path d="M338 0 Q98 200 -122 447" fill="none" stroke="#e6eef9" stroke-width="0.6"/><path d="M352 0 Q112 200 -108 447" fill="none" stroke="#e6eef9" stroke-width="0.6"/><path d="M366 0 Q126 200 -94 447" fill="none" stroke="#e6eef9" stroke-width="0.6"/><path d="M380 0 Q140 200 -80 447" fill="none" stroke="#e6eef9" stroke-width="0.6"/><path d="M394 0 Q154 200 -66 447" fill="none" stroke="#e6eef9" stroke-width="0.6"/><path d="M408 0 Q168 200 -52 447" fill="none" stroke="#e6eef9" stroke-width="0.6"/><path d="M422 0 Q182 200 -38 447" fill="none" stroke="#e6eef9" stroke-width="0.6"/><path d="M436 0 Q196 200 -24 447" fill="none" stroke="#e6eef9" stroke-width="0.6"/><path d="M450 0 Q210 200 -10 447" fill="none" stroke="#e6eef9" stroke-width="0.6"/><path d="M464 0 Q224 200 4 447" fill="none" stroke="#e6eef9" stroke-width="0.6"/><path d="M478 0 Q238 200 18 447" fill="none" stroke="#e6eef9" stroke-width="0.6"/><path d="M492 0 Q252 200 32 447" fill="none" stroke="#e6eef9" stroke-width="0.6"/><path d="M506 0 Q266 200 46 447" fill="none" stroke="#e6eef9" stroke-width="0.6"/><path d="M520 0 Q280 200 60 447" fill="none" stroke="#e6eef9" stroke-width="0.6"/><path d="M534 0 Q294 200 74 447" fill="none" stroke="#e6eef9" stroke-width="0.6"/><path d="M548 0 Q308 200 88 447" fill="none" stroke="#e6eef9" stroke-width="0.6"/><path d="M562 0 Q322 200 102 447" fill="none" stroke="#e6eef9" stroke-width="0.6"/><path d="M576 0 Q336 200 116 447" fill="none" stroke="#e6eef9" stroke-width="0.6"/><path d="M590 0 Q350 200 130 447" fill="none" stroke="#e6eef9" stroke-width="0.6"/><path d="M604 0 Q364 200 144 447" fill="none" stroke="#e6eef9" stroke-width="0.6"/><path d="M618 0 Q378 200 158 447" fill="none" stroke="#e6eef9" stroke-width="0.6"/><path d="M632 0 Q392 200 172 447" fill="none" stroke="#e6eef9" stroke-width="0.6"/><path d="M646 0 Q406 200 186 447" fill="none" stroke="#e6eef9" stroke-width="0.6"/><path d="M660 0 Q420 200 200 447" fill="none" stroke="#e6eef9" stroke-width="0.6"/><path d="M674 0 Q434 200 214 447" fill="none" stroke="#e6eef9" stroke-width="0.6"/><path d="M688 0 Q448 200 228 447" fill="none" stroke="#e6eef9" stroke-width="0.6"/><path d="M702 0 Q462 200 242 447" fill="none" stroke="#e6eef9" stroke-width="0.6"/><path d="M716 0 Q476 200 256 447" fill="none" stroke="#e6eef9" stroke-width="0.6"/><path d="M730 0 Q490 200 270 447" fill="none" stroke="#e6eef9" stroke-width="0.6"/><path d="M744 0 Q504 200 284 447" fill="none" stroke="#e6eef9" stroke-width="0.6"/><path d="M758 0 Q518 200 298 447" fill="none" stroke="#e6eef9" stroke-width="0.6"/><path d="M772 0 Q532 200 312 447" fill="none" stroke="#e6eef9" stroke-width="0.6"/><path d="M786 0 Q546 200 326 447" fill="none" stroke="#e6eef9" stroke-width="0.6"/><path d="M800 0 Q560 200 340 447" fill="none" stroke="#e6eef9" stroke-width="0.6"/><path d="M814 0 Q574 200 354 447" fill="none" stroke="#e6eef9" stroke-width="0.6"/><path d="M828 0 Q588 200 368 447" fill="none" stroke="#e6eef9" stroke-width="0.6"/><path d="M842 0 Q602 200 382 447" fill="none" stroke="#e6eef9" stroke-width="0.6"/><path d="M856 0 Q616 200 396 447" fill="none" stroke="#e6eef9" stroke-width="0.6"/><path d="M870 0 Q630 200 410 447" fill="none" stroke="#e6eef9" stroke-width="0.6"/><path d="M884 0 Q644 200 424 447" fill="none" stroke="#e6eef9" stroke-width="0.6"/><path d="M898 0 Q658 200 438 447" fill="none" stroke="#e6eef9" stroke-width="0.6"/><path d="M912 0 Q672 200 452 447" fill="none" stroke="#e6eef9" stroke-width="0.6"/><path d="M926 0 Q686 200 466 447" fill="none" stroke="#e6eef9" stroke-width="0.6"/><path d="M940 0 Q700 200 480 447" fill="none" stroke="#e6eef9" stroke-width="0.6"/><path d="M954 0 Q714 200 494 447" fill="none" stroke="#e6eef9" stroke-width="0.6"/><path d="M968 0 Q728 200 508 447" fill="none" stroke="#e6eef9" stroke-width="0.6"/><path d="M982 0 Q742 200 522 447" fill="none" stroke="#e6eef9" stroke-width="0.6"/><path d="M996 0 Q756 200 536 447" fill="none" stroke="#e6eef9" stroke-width="0.6"/><path d="M-100 0 Q160 230 230 447" fill="none" stroke="#f1f5fb" stroke-width="0.5"/><path d="M-76 0 Q184 230 254 447" fill="none" stroke="#f1f5fb" stroke-width="0.5"/><path d="M-52 0 Q208 230 278 447" fill="none" stroke="#f1f5fb" stroke-width="0.5"/><path d="M-28 0 Q232 230 302 447" fill="none" stroke="#f1f5fb" stroke-width="0.5"/><path d="M-4 0 Q256 230 326 447" fill="none" stroke="#f1f5fb" stroke-width="0.5"/><path d="M20 0 Q280 230 350 447" fill="none" stroke="#f1f5fb" stroke-width="0.5"/><path d="M44 0 Q304 230 374 447" fill="none" stroke="#f1f5fb" stroke-width="0.5"/><path d="M68 0 Q328 230 398 447" fill="none" stroke="#f1f5fb" stroke-width="0.5"/><path d="M92 0 Q352 230 422 447" fill="none" stroke="#f1f5fb" stroke-width="0.5"/><path d="M116 0 Q376 230 446 447" fill="none" stroke="#f1f5fb" stroke-width="0.5"/><path d="M140 0 Q400 230 470 447" fill="none" stroke="#f1f5fb" stroke-width="0.5"/><path d="M164 0 Q424 230 494 447" fill="none" stroke="#f1f5fb" stroke-width="0.5"/><path d="M188 0 Q448 230 518 447" fill="none" stroke="#f1f5fb" stroke-width="0.5"/><path d="M212 0 Q472 230 542 447" fill="none" stroke="#f1f5fb" stroke-width="0.5"/><path d="M236 0 Q496 230 566 447" fill="none" stroke="#f1f5fb" stroke-width="0.5"/><path d="M260 0 Q520 230 590 447" fill="none" stroke="#f1f5fb" stroke-width="0.5"/><path d="M284 0 Q544 230 614 447" fill="none" stroke="#f1f5fb" stroke-width="0.5"/><path d="M308 0 Q568 230 638 447" fill="none" stroke="#f1f5fb" stroke-width="0.5"/><path d="M332 0 Q592 230 662 447" fill="none" stroke="#f1f5fb" stroke-width="0.5"/><path d="M356 0 Q616 230 686 447" fill="none" stroke="#f1f5fb" stroke-width="0.5"/><path d="M380 0 Q640 230 710 447" fill="none" stroke="#f1f5fb" stroke-width="0.5"/><path d="M404 0 Q664 230 734 447" fill="none" stroke="#f1f5fb" stroke-width="0.5"/><path d="M428 0 Q688 230 758 447" fill="none" stroke="#f1f5fb" stroke-width="0.5"/><path d="M452 0 Q712 230 782 447" fill="none" stroke="#f1f5fb" stroke-width="0.5"/><path d="M476 0 Q736 230 806 447" fill="none" stroke="#f1f5fb" stroke-width="0.5"/><path d="M500 0 Q760 230 830 447" fill="none" stroke="#f1f5fb" stroke-width="0.5"/><path d="M524 0 Q784 230 854 447" fill="none" stroke="#f1f5fb" stroke-width="0.5"/><path d="M548 0 Q808 230 878 447" fill="none" stroke="#f1f5fb" stroke-width="0.5"/><path d="M572 0 Q832 230 902 447" fill="none" stroke="#f1f5fb" stroke-width="0.5"/><path d="M596 0 Q856 230 926 447" fill="none" stroke="#f1f5fb" stroke-width="0.5"/><path d="M20 146.0 Q120 131.7 200 125.0 T 330 140.0" fill="none" stroke="#d9e6f6" stroke-width="0.5"/><path d="M20 147.4 Q120 133.7 200 128.5 T 330 141.2" fill="none" stroke="#d9e6f6" stroke-width="0.5"/><path d="M20 148.7 Q120 135.7 200 132.1 T 330 142.4" fill="none" stroke="#d9e6f6" stroke-width="0.5"/><path d="M20 150.1 Q120 137.7 200 135.6 T 330 143.5" fill="none" stroke="#d9e6f6" stroke-width="0.5"/><path d="M20 151.4 Q120 139.7 200 139.1 T 330 144.7" fill="none" stroke="#d9e6f6" stroke-width="0.5"/><path d="M20 152.8 Q120 141.7 200 142.6 T 330 145.9" fill="none" stroke="#d9e6f6" stroke-width="0.5"/><path d="M20 154.1 Q120 143.7 200 146.2 T 330 147.1" fill="none" stroke="#d9e6f6" stroke-width="0.5"/><path d="M20 155.5 Q120 145.7 200 149.7 T 330 148.2" fill="none" stroke="#d9e6f6" stroke-width="0.5"/><path d="M20 156.8 Q120 147.7 200 153.2 T 330 149.4" fill="none" stroke="#d9e6f6" stroke-width="0.5"/><path d="M20 158.2 Q120 149.8 200 156.8 T 330 150.6" fill="none" stroke="#d9e6f6" stroke-width="0.5"/><path d="M20 159.5 Q120 151.8 200 160.3 T 330 151.8" fill="none" stroke="#d9e6f6" stroke-width="0.5"/><path d="M20 160.9 Q120 153.8 200 163.8 T 330 152.9" fill="none" stroke="#d9e6f6" stroke-width="0.5"/><path d="M20 162.2 Q120 155.8 200 167.4 T 330 154.1" fill="none" stroke="#d9e6f6" stroke-width="0.5"/><path d="M20 163.6 Q120 157.8 200 170.9 T 330 155.3" fill="none" stroke="#d9e6f6" stroke-width="0.5"/><path d="M20 164.9 Q120 159.8 200 174.4 T 330 156.5" fill="none" stroke="#d9e6f6" stroke-width="0.5"/><path d="M20 166.3 Q120 161.8 200 177.9 T 330 157.6" fill="none" stroke="#d9e6f6" stroke-width="0.5"/><path d="M20 167.6 Q120 163.8 200 181.5 T 330 158.8" fill="none" stroke="#d9e6f6" stroke-width="0.5"/><path d="M20 169.0 Q120 165.8 200 185.0 T 330 160.0" fill="none" stroke="#d9e6f6" stroke-width="0.5"/><path d="M300 315.0 Q380 300.0 450 290.0 T 560 310.0" fill="none" stroke="#dce8f7" stroke-width="0.5"/><path d="M300 315.7 Q380 303.3 450 294.7 T 560 312.7" fill="none" stroke="#dce8f7" stroke-width="0.5"/><path d="M300 316.3 Q380 306.7 450 299.3 T 560 315.3" fill="none" stroke="#dce8f7" stroke-width="0.5"/><path d="M300 317.0 Q380 310.0 450 304.0 T 560 318.0" fill="none" stroke="#dce8f7" stroke-width="0.5"/><path d="M300 317.7 Q380 313.3 450 308.7 T 560 320.7" fill="none" stroke="#dce8f7" stroke-width="0.5"/><path d="M300 318.3 Q380 316.7 450 313.3 T 560 323.3" fill="none" stroke="#dce8f7" stroke-width="0.5"/><path d="M300 319.0 Q380 320.0 450 318.0 T 560 326.0" fill="none" stroke="#dce8f7" stroke-width="0.5"/><path d="M300 319.7 Q380 323.3 450 322.7 T 560 328.7" fill="none" stroke="#dce8f7" stroke-width="0.5"/><path d="M300 320.3 Q380 326.7 450 327.3 T 560 331.3" fill="none" stroke="#dce8f7" stroke-width="0.5"/><path d="M300 321.0 Q380 330.0 450 332.0 T 560 334.0" fill="none" stroke="#dce8f7" stroke-width="0.5"/><path d="M300 321.7 Q380 333.3 450 336.7 T 560 336.7" fill="none" stroke="#dce8f7" stroke-width="0.5"/><path d="M300 322.3 Q380 336.7 450 341.3 T 560 339.3" fill="none" stroke="#dce8f7" stroke-width="0.5"/><path d="M300 323.0 Q380 340.0 450 346.0 T 560 342.0" fill="none" stroke="#dce8f7" stroke-width="0.5"/><path d="M300 323.7 Q380 343.3 450 350.7 T 560 344.7" fill="none" stroke="#dce8f7" stroke-width="0.5"/><path d="M300 324.3 Q380 346.7 450 355.3 T 560 347.3" fill="none" stroke="#dce8f7" stroke-width="0.5"/><path d="M300 325.0 Q380 350.0 450 360.0 T 560 350.0" fill="none" stroke="#dce8f7" stroke-width="0.5"/></g><path d="M234 17 H562 V430" fill="none" stroke="#29a9e1" stroke-width="1.3"/><path d="M228 21.8 H557.5 V425.5" fill="none" stroke="#29a9e1" stroke-width="1.3"/><path d="M16 160 V430 H470" fill="none" stroke="#fbc98a" stroke-width="1.3"/><path d="M21 160 V425.5 H470" fill="none" stroke="#f9a940" stroke-width="1.6"/><path d="M122 0 L152.5 49.5 L121.4 101.6 L88 47 Z" fill="#1e74bb"/><path d="M0 0 L52 0 L0 91 Z" fill="#2e3192"/><path d="M52 0 L57 0 L0 99 L0 91 Z" fill="#f9a940"/><path d="M57 0 L120.5 0 L0 207 L0 99 Z" fill="#29a9e1"/><path d="M182 0 L241 0 L182.7 101.6 L121.4 101.6 Z" fill="#29a9e1"/><g transform="translate(581,447) rotate(180) scale(0.637)"><path d="M122 0 L152.5 49.5 L121.4 101.6 L88 47 Z" fill="#1e74bb"/><path d="M0 0 L52 0 L0 91 Z" fill="#2e3192"/><path d="M52 0 L57 0 L0 99 L0 91 Z" fill="#f9a940"/><path d="M57 0 L120.5 0 L0 207 L0 99 Z" fill="#29a9e1"/><path d="M182 0 L241 0 L182.7 101.6 L121.4 101.6 Z" fill="#29a9e1"/></g><g transform="translate(510.8,80)"><path d="M-25.4 38.7 L-21 38.7 L-27.2 83 L-31.3 84.1 Z" fill="#f9a940" stroke="#f9a940" stroke-width="0.8"/><path d="M21.6 38.7 L26 38.7 L32 84.1 L27.8 83 Z" fill="#f9a940" stroke="#f9a940" stroke-width="0.8"/><path d="M-18.5 41 L19.5 41 L23.7 79.6 L0.6 64.8 L-22.8 79.6 Z" fill="#2e3192"/><polygon points="0.00,-40.00 4.98,-34.64 11.27,-38.38 14.54,-31.84 21.63,-33.65 22.92,-26.45 30.23,-26.19 29.44,-18.92 36.39,-16.62 33.58,-9.86 39.59,-5.69 35.00,-0.00 39.59,5.69 33.58,9.86 36.39,16.62 29.44,18.92 30.23,26.19 22.92,26.45 21.63,33.65 14.54,31.84 11.27,38.38 4.98,34.64 0.00,40.00 -4.98,34.64 -11.27,38.38 -14.54,31.84 -21.63,33.65 -22.92,26.45 -30.23,26.19 -29.44,18.92 -36.39,16.62 -33.58,9.86 -39.59,5.69 -35.00,0.00 -39.59,-5.69 -33.58,-9.86 -36.39,-16.62 -29.44,-18.92 -30.23,-26.19 -22.92,-26.45 -21.63,-33.65 -14.54,-31.84 -11.27,-38.38 -4.98,-34.64" fill="#29a9e1"/><circle r="27" fill="#fff"/><path d="M-10 -13 H10 V-4 Q10 6 0 8 Q-10 6 -10 -4 Z" fill="#f9a940"/><path d="M-10 -9.5 Q-16.5 -10 -15 -3 Q-13 3 -6 3" fill="none" stroke="#f9a940" stroke-width="2.6"/><path d="M10 -9.5 Q16.5 -10 15 -3 Q13 3 6 3" fill="none" stroke="#f9a940" stroke-width="2.6"/><rect x="-1.8" y="6" width="3.6" height="6" fill="#f9a940"/><path d="M-7.5 16.5 Q-7 11 0 11 Q7 11 7.5 16.5 Z" fill="#f9a940"/></g><text x="290.5" y="148.5" text-anchor="middle" font-family="Liberation Serif" font-style="italic" font-size="47" fill="#2e3192" stroke="#2e3192" stroke-width="0.6">Certificate</text><text x="291" y="189.4" text-anchor="middle" font-family="Liberation Serif" font-style="italic" font-size="24.5" fill="#2e3192" stroke="#2e3192" stroke-width="0.2">OF ACHIEVEMENT</text><text x="290.5" y="220.7" text-anchor="middle" font-family="Liberation Serif" font-style="italic" font-size="11.8" fill="#3d4aa5" stroke="#3d4aa5" stroke-width="0.25" textLength="53" lengthAdjust="spacingAndGlyphs">awarded to</text><text x="290.7" y="264.7" text-anchor="middle" font-family="Liberation Serif" font-style="italic" font-weight="700" font-size="32.5" fill="#3a3a3a" textLength="254" lengthAdjust="spacingAndGlyphs">Cecil Montgomery</text><rect x="152.5" y="270.5" width="271.5" height="1.2" fill="#29a9e1"/><text x="290" y="313" text-anchor="middle" font-family="Liberation Serif" font-style="italic" font-size="11.5" fill="#3d4aa5" stroke="#3d4aa5" stroke-width="0.25" textLength="76" lengthAdjust="spacingAndGlyphs">in recognition of</text><text x="289.8" y="325.4" text-anchor="middle" font-family="Liberation Serif" font-style="italic" font-size="11.8" fill="#3d4aa5" stroke="#3d4aa5" stroke-width="0.25" textLength="192.5" lengthAdjust="spacingAndGlyphs">your dedication, passion, and hard work</text><path d="M95 392 H215 M325 392 H445" stroke="#c9d3e6" stroke-width="0.8"/><text x="100" y="388" font-family="Liberation Serif" font-size="8" fill="#3d4aa5">AWARDED</text><text x="330" y="388" font-family="Liberation Serif" font-size="8" fill="#3d4aa5">SIGNED</text><text x="150" y="404" font-family="Liberation Serif" font-size="8" fill="#3d4aa5">Jessica Hill - President</text><text x="410" y="404" font-family="Liberation Serif" font-size="8" fill="#3d4aa5">Date</text></svg></div>
<div style="position:absolute;left:899px;top:152px;width:17px;height:389px;background:#f0f0f0;"></div>
<svg style="position:absolute;left:903px;top:158px;overflow:visible;" width="10" height="6" viewBox="0 0 10 6"><path d="M0.5 5.5 L9 5.5 L4.75 0.5 Z" fill="#444"/></svg>
<svg style="position:absolute;left:903px;top:529px;overflow:visible;" width="10" height="6" viewBox="0 0 10 6"><path d="M0.5 0.5 L9 0.5 L4.75 5.5 Z" fill="#444"/></svg>
<div style="position:absolute;left:899px;top:196px;width:2px;height:271px;background:#ffffff;"></div>
<div style="position:absolute;left:901px;top:196px;width:13px;height:271px;background:#c2c2c2;"></div>
<div style="position:absolute;left:916px;top:152px;width:1px;height:617px;background:#ffffff;"></div>
<div style="position:absolute;left:917px;top:152px;width:1px;height:617px;background:#cacaca;"></div>
<div style="position:absolute;left:222px;top:541px;width:694px;height:228px;background:#ffffff;"></div>
<div style="position:absolute;left:221px;top:541px;width:1px;height:227px;background:#cfcfcf;"></div>
<div style="position:absolute;left:222px;top:541px;width:694px;height:55px;background:#e6e6e6;"></div>
<div style="position:absolute;left:228.00px;top:548.00px;font-size:13px;line-height:13px;color:#444;font-weight:400;white-space:nowrap;letter-spacing:0.113px;">Document History</div>
<svg style="position:absolute;left:904px;top:549px;overflow:visible;" width="10" height="14" viewBox="0 0 10 14"><path d="M2.2 7.4 V4 Q2.2 1 4.45 1 Q6.7 1 6.7 4 V7.4" fill="#fff" stroke="#707070" stroke-width="1.4"/><path d="M0.4 7.7 H8.5 M4.45 7.7 V11.8" stroke="#707070" stroke-width="1.3"/></svg>
<div style="position:absolute;left:222px;top:570px;width:2px;height:25px;background:#c8c8c8;"></div>
<div style="position:absolute;left:260px;top:571px;width:1px;height:24px;background:#d4d4d4;"></div>
<div style="position:absolute;left:320px;top:571px;width:1px;height:24px;background:#d4d4d4;"></div>
<div style="position:absolute;left:485px;top:571px;width:1px;height:24px;background:#d4d4d4;"></div>
<div style="position:absolute;left:616px;top:571px;width:1px;height:24px;background:#d4d4d4;"></div>
<div style="position:absolute;left:222px;top:595px;width:694px;height:1px;background:#a8a8a8;"></div>
<div style="position:absolute;left:269.20px;top:578.00px;font-size:12px;line-height:12px;color:#333;font-weight:400;white-space:nowrap;letter-spacing:-0.172px;">Version</div>
<div style="position:absolute;left:328.80px;top:578.00px;font-size:12px;line-height:12px;color:#333;font-weight:400;white-space:nowrap;">User</div>
<div style="position:absolute;left:494.30px;top:578.00px;font-size:12px;line-height:12px;color:#333;font-weight:400;white-space:nowrap;">Date</div>
<div style="position:absolute;left:624.50px;top:578.00px;font-size:12px;line-height:12px;color:#333;font-weight:400;white-space:nowrap;">Comment</div>
<div style="position:absolute;left:222px;top:596px;width:694px;height:26px;background:#efefef;"></div>
<div style="position:absolute;left:222px;top:621px;width:694px;height:1px;background:#dedede;"></div>
<div style="position:absolute;left:266.70px;top:604.00px;font-size:12px;line-height:12px;color:#222;font-weight:400;white-space:nowrap;">4</div>
<div style="position:absolute;left:327.00px;top:605.00px;font-size:11.3px;line-height:11.3px;color:#222;font-weight:400;white-space:nowrap;letter-spacing:-0.040px;">ADMINISTRATOR</div>
<div style="position:absolute;left:485px;top:596px;width:131px;height:26px;overflow:hidden"><div style="position:absolute;left:8px;top:8px;font-size:12px;line-height:12px;color:#222;white-space:nowrap">11/4/2019 8:12:30 AM</div></div>
<div style="position:absolute;left:624.00px;top:604.00px;font-size:12px;line-height:12px;color:#222;font-weight:400;white-space:nowrap;">updated</div>
<div style="position:absolute;left:222px;top:622px;width:694px;height:24px;background:#ffffff;"></div>
<div style="position:absolute;left:222px;top:645px;width:694px;height:1px;background:#dedede;"></div>
<div style="position:absolute;left:266.70px;top:629.00px;font-size:12px;line-height:12px;color:#222;font-weight:400;white-space:nowrap;">3</div>
<div style="position:absolute;left:327.00px;top:630.00px;font-size:11.3px;line-height:11.3px;color:#222;font-weight:400;white-space:nowrap;letter-spacing:-0.040px;">ADMINISTRATOR</div>
<div style="position:absolute;left:485px;top:622px;width:131px;height:24px;overflow:hidden"><div style="position:absolute;left:8px;top:7px;font-size:12px;line-height:12px;color:#222;white-space:nowrap">10/10/2019 12:33:51 PM</div></div>
<div style="position:absolute;left:624.00px;top:629.00px;font-size:12px;line-height:12px;color:#222;font-weight:400;white-space:nowrap;">Update</div>
<div style="position:absolute;left:222px;top:646px;width:694px;height:24px;background:#efefef;"></div>
<div style="position:absolute;left:222px;top:669px;width:694px;height:1px;background:#dedede;"></div>
<div style="position:absolute;left:266.70px;top:653.00px;font-size:12px;line-height:12px;color:#222;font-weight:400;white-space:nowrap;">2</div>
<div style="position:absolute;left:327.00px;top:654.00px;font-size:11.3px;line-height:11.3px;color:#222;font-weight:400;white-space:nowrap;letter-spacing:-0.040px;">ADMINISTRATOR</div>
<div style="position:absolute;left:485px;top:646px;width:131px;height:24px;overflow:hidden"><div style="position:absolute;left:8px;top:7px;font-size:12px;line-height:12px;color:#222;white-space:nowrap">10/10/2019 12:00:19 PM</div></div>
<div style="position:absolute;left:624.00px;top:653.00px;font-size:12px;line-height:12px;color:#222;font-weight:400;white-space:nowrap;">updated</div>
<div style="position:absolute;left:222px;top:670px;width:694px;height:24px;background:#ffffff;"></div>
<div style="position:absolute;left:222px;top:693px;width:694px;height:1px;background:#dedede;"></div>
<div style="position:absolute;left:266.70px;top:677.00px;font-size:12px;line-height:12px;color:#222;font-weight:400;white-space:nowrap;">1</div>
<div style="position:absolute;left:327.00px;top:678.00px;font-size:11.3px;line-height:11.3px;color:#222;font-weight:400;white-space:nowrap;letter-spacing:-0.040px;">ADMINISTRATOR</div>
<div style="position:absolute;left:485px;top:670px;width:131px;height:24px;overflow:hidden"><div style="position:absolute;left:8px;top:7px;font-size:12px;line-height:12px;color:#222;white-space:nowrap">10/10/2019 11:42:51 AM</div></div>
<div style="position:absolute;left:624.00px;top:677.00px;font-size:12px;line-height:12px;color:#222;font-weight:400;white-space:nowrap;">Initial check-in</div>
<svg style="position:absolute;left:229px;top:598px;overflow:visible;" width="24" height="22" viewBox="0 0 24 22"><path d="M9.7 2.6 L20.6 12.8 L13.9 19.5 L3.6 7.4 Z" fill="#fcd462" stroke="#f0bd45" stroke-width="1.4" stroke-linejoin="round"/><path d="M8.8 5.6 Q4.2 7 5.4 13.8 Q6.3 17.6 9.8 17.2" fill="none" stroke="#8c8c8c" stroke-width="1.7"/></svg>
<div style="position:absolute;left:222px;top:742px;width:694px;height:25px;background:#e8e8e8;"></div>
<div style="position:absolute;left:229px;top:746px;width:142px;height:21px;background:#ffffff;"></div>
<div style="position:absolute;left:371px;top:746px;width:122px;height:21px;background:#e4e4e4;border:1px solid #a8a8a8;border-bottom:none;"></div>
<div style="position:absolute;left:247.10px;top:750.00px;font-size:13px;line-height:13px;color:#444;font-weight:400;white-space:nowrap;letter-spacing:0.132px;">Document History</div>
<div style="position:absolute;left:389.00px;top:750.00px;font-size:13px;line-height:13px;color:#444;font-weight:400;white-space:nowrap;letter-spacing:-0.023px;">Linked Objects</div>
<div style="position:absolute;left:918px;top:152px;width:343px;height:617px;background:#f6f6f6;"></div>
<div style="position:absolute;left:918px;top:152px;width:343px;height:28px;background:#e6e6e6;"></div>
<div style="position:absolute;left:923.80px;top:158.00px;font-size:13px;line-height:13px;color:#444;font-weight:400;white-space:nowrap;letter-spacing:0.026px;">Document Details</div>
<svg style="position:absolute;left:1252px;top:159px;overflow:visible;" width="10" height="14" viewBox="0 0 10 14"><path d="M2.2 7.4 V4 Q2.2 1 4.45 1 Q6.7 1 6.7 4 V7.4" fill="#fff" stroke="#707070" stroke-width="1.4"/><path d="M0.4 7.7 H8.5 M4.45 7.7 V11.8" stroke="#707070" stroke-width="1.3"/></svg>
<svg style="position:absolute;left:923px;top:190.3px;overflow:visible;" width="8" height="8" viewBox="0 0 8 8"><path d="M7 0.5 L7 7 L0.5 7 Z" fill="#b4b4b4"/></svg>
<div style="position:absolute;left:940.40px;top:187.00px;font-size:13px;line-height:13px;color:#333;font-weight:700;white-space:nowrap;letter-spacing:-0.109px;">Document Information</div>
<div style="position:absolute;left:944.30px;top:211.00px;font-size:12px;line-height:12px;color:#3a3a3a;font-weight:400;white-space:nowrap;letter-spacing:-0.025px;">Document ID: 38</div>
<div style="position:absolute;left:944.30px;top:235.00px;font-size:12px;line-height:12px;color:#3a3a3a;font-weight:400;white-space:nowrap;letter-spacing:0.014px;">Version: 4</div>
<div style="position:absolute;left:944.30px;top:259.00px;font-size:12px;line-height:12px;color:#3a3a3a;font-weight:400;white-space:nowrap;letter-spacing:-0.239px;">Size: 1305 KB</div>
<div style="position:absolute;left:944.30px;top:283.00px;font-size:12px;line-height:12px;color:#3a3a3a;font-weight:400;white-space:nowrap;letter-spacing:0.259px;">Created on: 10/10/2019 11:42:51 AM</div>
<div style="position:absolute;left:944.30px;top:307.00px;font-size:12px;line-height:12px;color:#3a3a3a;font-weight:400;white-space:nowrap;letter-spacing:0.079px;">Created by: Administrator</div>
<div style="position:absolute;left:944.30px;top:331.00px;font-size:12px;line-height:12px;color:#3a3a3a;font-weight:400;white-space:nowrap;letter-spacing:0.339px;">Modified: 11/4/2019 8:12:30 AM</div>
<div style="position:absolute;left:944.30px;top:355.00px;font-size:12px;line-height:12px;color:#3a3a3a;font-weight:400;white-space:nowrap;letter-spacing:0.177px;">Modified by: Administrator</div>
<svg style="position:absolute;left:923px;top:381.1px;overflow:visible;" width="8" height="8" viewBox="0 0 8 8"><path d="M7 0.5 L7 7 L0.5 7 Z" fill="#b4b4b4"/></svg>
<div style="position:absolute;left:940.40px;top:378.00px;font-size:13px;line-height:13px;color:#333;font-weight:700;white-space:nowrap;letter-spacing:-0.083px;">Index Data</div>
<div style="position:absolute;left:944.30px;top:402.00px;font-size:12px;line-height:12px;color:#3a3a3a;font-weight:400;white-space:nowrap;letter-spacing:-0.103px;">Name: Test File</div>
<div style="position:absolute;left:944.30px;top:426.00px;font-size:12px;line-height:12px;color:#3a3a3a;font-weight:400;white-space:nowrap;letter-spacing:0.283px;">Date of submission: 10/10/2019</div>
<svg style="position:absolute;left:943px;top:450px;overflow:visible;" width="20" height="12" viewBox="0 0 20 12"><rect x="0.8" y="0.8" width="17.5" height="10.5" fill="#fff" stroke="#666" stroke-width="1.4"/><path d="M1 4.5 H18" stroke="#888" stroke-width="1"/></svg>
<div style="position:absolute;left:968.00px;top:450.00px;font-size:12.5px;line-height:12.5px;color:#1a55f0;font-weight:400;white-space:nowrap;letter-spacing:0.260px;">Index Data...</div>
<svg style="position:absolute;left:923px;top:475.2px;overflow:visible;" width="8" height="8" viewBox="0 0 8 8"><path d="M7 0.5 L7 7 L0.5 7 Z" fill="#b4b4b4"/></svg>
<div style="position:absolute;left:940.40px;top:472.00px;font-size:13px;line-height:13px;color:#333;font-weight:700;white-space:nowrap;letter-spacing:-0.127px;">File Information</div>
<svg style="position:absolute;left:1063px;top:492px;overflow:visible;" width="34" height="37" viewBox="0 0 34 37"><path d="M5.5 1 H25 L32 8 V35.5 H5.5 Z" fill="#fff" stroke="#999" stroke-width="1"/><path d="M25 1 V8 H32" fill="#eee" stroke="#999" stroke-width="1"/><path d="M16 11h13M16 15h13M16 19h13M16 23h13M16 27h13M16 31h13M9 7h13" stroke="#8a8a8a" stroke-width="1"/><path d="M1 12 L16 10.5 V32.5 L1 31 Z" fill="#2b5797"/><text x="8.5" y="26" text-anchor="middle" font-family="Liberation Sans" font-weight="700" font-size="11" fill="#fff">W</text></svg>
<div style="position:absolute;left:944.30px;top:536.00px;font-size:12px;line-height:12px;color:#3a3a3a;font-weight:400;white-space:nowrap;letter-spacing:-0.077px;">File name: Employee Demo Certificate.docx</div>
<div style="position:absolute;left:944.30px;top:560.00px;font-size:12px;line-height:12px;color:#3a3a3a;font-weight:400;white-space:nowrap;letter-spacing:-0.255px;">Size: 1304 KB</div>
<div style="position:absolute;left:944.30px;top:584.00px;font-size:12px;line-height:12px;color:#3a3a3a;font-weight:400;white-space:nowrap;letter-spacing:-0.228px;">Page Count: –</div>
<svg style="position:absolute;left:943px;top:614px;overflow:visible;" width="20" height="20" viewBox="0 0 20 20"><path d="M2.5 16 L15.5 2.5 L18.5 5.5 L5 18.5 L1.5 19 Z" fill="#f0c040" stroke="#a08a50" stroke-width="1"/><path d="M1.5 19 L2.5 16 L5 18.5 Z" fill="#aaa"/></svg>
<div style="position:absolute;left:968.30px;top:618.00px;font-size:12.5px;line-height:12.5px;color:#1a55f0;font-weight:400;white-space:nowrap;letter-spacing:0.001px;">Edit File Name</div>
<div style="position:absolute;left:0px;top:766px;width:221px;height:3px;background:#fdfdfd;"></div>
<div style="position:absolute;left:222px;top:767px;width:694px;height:2px;background:#ffffff;"></div>
<div style="position:absolute;left:0px;top:769px;width:1261px;height:24px;background:#2b579a;"></div>
<div style="position:absolute;left:11.40px;top:775.00px;font-size:13.4px;line-height:13.4px;color:#fff;font-weight:400;white-space:nowrap;letter-spacing:0.034px;-webkit-text-stroke:0.2px #fff;">Administrator</div>
<div style="position:absolute;left:1068px;top:780.5px;width:11.5px;height:2.2px;background:#9ab0d4;"></div>
<div style="position:absolute;left:1093.5px;top:778px;width:107px;height:5px;background:#9ab0d4;"></div>
<div style="position:absolute;left:1088px;top:772.5px;width:6px;height:17.5px;background:#8aa0c4;"></div>
<div style="position:absolute;left:1205.5px;top:780.2px;width:11px;height:2.2px;background:#9ab0d4;"></div>
<div style="position:absolute;left:1209.8px;top:776px;width:2.2px;height:11px;background:#9ab0d4;"></div>
</body></html>
